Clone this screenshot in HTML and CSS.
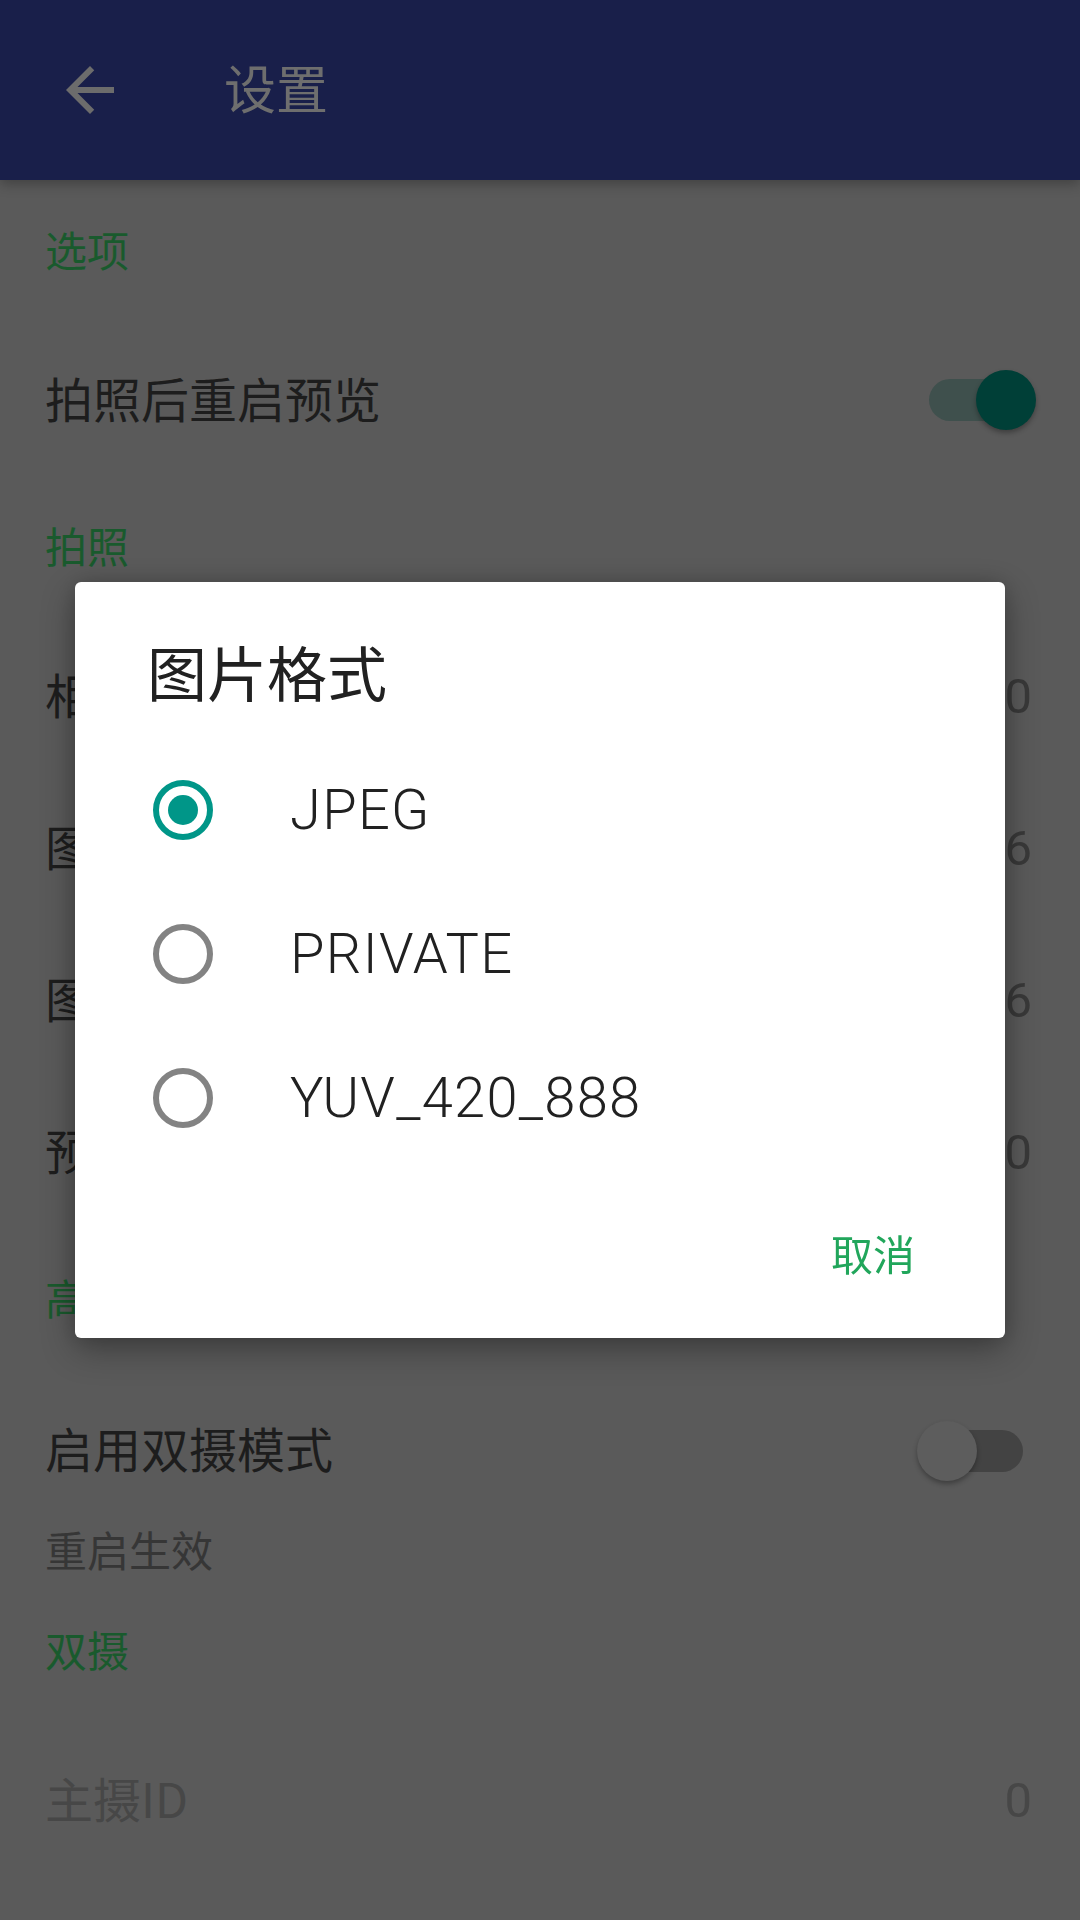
FILE: index.html
```html
<!DOCTYPE html>
<html lang="zh-CN">
<head>
<meta charset="utf-8">
<title>设置</title>
<link rel="stylesheet" href="styles.css">
</head>
<body>
<div class="screen">
  <header class="appbar">
    <svg class="back" viewBox="0 0 24 24" width="72" height="72"><path d="M20 11H7.83l5.59-5.59L12 4l-8 8 8 8 1.41-1.41L7.83 13H20v-2z"/></svg>
    <h1 class="appbar-title">设置</h1>
  </header>

  <main class="prefs">
    <div class="category">选项</div>
    <div class="row">
      <span class="row-title">拍照后重启预览</span>
      <span class="switch on"><span class="track"><span class="thumb"></span></span></span>
    </div>

    <div class="category">拍照</div>
    <div class="row"><span class="row-title">相机ID</span><span class="value">0</span></div>
    <div class="row"><span class="row-title">图片格式</span><span class="value">256</span></div>
    <div class="row"><span class="row-title">图片尺寸</span><span class="value">4608x3456</span></div>
    <div class="row"><span class="row-title">预览尺寸</span><span class="value">1920x1080</span></div>

    <div class="category">高级</div>
    <div class="row row-two">
      <div class="row-text">
        <span class="row-title">启用双摄模式</span>
        <span class="summary">重启生效</span>
      </div>
      <span class="switch off"><span class="track"><span class="thumb"></span></span></span>
    </div>

    <div class="category">双摄</div>
    <div class="row disabled"><span class="row-title">主摄ID</span><span class="value">0</span></div>
  </main>

  <div class="overlay">
    <div class="dialog">
      <h2 class="dialog-title">图片格式</h2>
      <ul class="options">
        <li class="option"><span class="radio checked"></span><span class="option-label">JPEG</span></li>
        <li class="option"><span class="radio"></span><span class="option-label">PRIVATE</span></li>
        <li class="option"><span class="radio"></span><span class="option-label">YUV_420_888</span></li>
      </ul>
      <div class="actions"><span class="btn">取消</span></div>
    </div>
  </div>
</div>
</body>
</html>
```
FILE: styles.css
```css
html, body {
  margin: 0;
  padding: 0;
}
body {
  width: 1080px;
  height: 1920px;
  background: #5a5a5a;
  font-family: Roboto, "Noto Sans CJK SC", sans-serif;
  overflow: hidden;
}
.screen {
  width: 1080px;
  height: 1920px;
  background: #5a5a5a;
}

/* App bar */
.appbar {
  height: 180px;
  background: #191f4a;
  display: flex;
  align-items: center;
  padding-left: 54px;
  box-shadow: 0 4px 12px rgba(0, 0, 0, 0.28);
  position: relative;
  z-index: 1;
}
.back {
  fill: #6c6c6c;
  flex-shrink: 0;
}
.appbar-title {
  margin: 0 0 6px 98px;
  font-family: "Noto Sans CJK SC", sans-serif;
  font-weight: 400;
  font-size: 52px;
  color: #6e6e6e;
  line-height: 1.2;
}

/* Preference list */
.prefs {
  display: flex;
  flex-direction: column;
}
.category {
  height: 144px;
  box-sizing: border-box;
  padding: 0 0 6px 45px;
  display: flex;
  align-items: center;
  font-family: "Noto Sans CJK SC", sans-serif;
  font-size: 42px;
  color: #195a2d;
  line-height: 1.2;
}
.row {
  height: 152px;
  box-sizing: border-box;
  display: flex;
  align-items: center;
  justify-content: space-between;
  padding: 0 48px 6px 45px;
}
.row-title {
  font-family: "Noto Sans CJK SC", sans-serif;
  font-size: 48px;
  color: #1d1d1d;
  line-height: 64px;
}
.value {
  padding-top: 7px;
  font-family: Roboto, sans-serif;
  font-size: 49px;
  color: #393939;
}
.disabled .row-title,
.disabled .value {
  color: #474747;
}
.row-two {
  height: 208px;
  align-items: flex-start;
  padding-top: 43px;
  padding-bottom: 0;
}
.row-text {
  display: flex;
  flex-direction: column;
}
.summary {
  margin-top: 42px;
  font-family: "Noto Sans CJK SC", sans-serif;
  font-size: 42px;
  line-height: 56px;
  color: #363636;
}

/* Switch */
.switch {
  display: flex;
  align-items: center;
  height: 60px;
  margin-right: 9px;
}
.row .switch {
  margin-bottom: -6px;
}
.row-two .switch {
  margin-top: 6px;
  margin-bottom: 0;
}
.track {
  width: 94px;
  height: 42px;
  border-radius: 21px;
  display: flex;
  align-items: center;
}
.thumb {
  width: 60px;
  height: 60px;
  border-radius: 50%;
  flex-shrink: 0;
  box-shadow: 0 3px 5px rgba(0, 0, 0, 0.3);
}
.switch.on .track {
  background: #3f504d;
  justify-content: flex-end;
}
.switch.on .thumb {
  background: #003f37;
  margin-right: -13px;
}
.switch.off .track {
  background: #434343;
  justify-content: flex-start;
}
.switch.off .thumb {
  background: #5d5d5d;
  margin-left: -12px;
}

/* Dialog */
.overlay {
  position: fixed;
  inset: 0;
  display: flex;
  align-items: center;
  justify-content: center;
  z-index: 2;
}
.dialog {
  width: 930px;
  background: #ffffff;
  border-radius: 6px;
  padding: 49px 0 29px;
  box-sizing: border-box;
  box-shadow: 0 12px 34px rgba(0, 0, 0, 0.3), 0 0 22px rgba(0, 0, 0, 0.16);
}
.dialog-title {
  margin: 0 0 27px;
  padding-left: 72px;
  font-family: "Noto Sans CJK SC", sans-serif;
  font-weight: 400;
  font-size: 60px;
  line-height: 80px;
  color: #212121;
}
.options {
  list-style: none;
  margin: 0;
  padding: 0;
}
.option {
  height: 144px;
  display: flex;
  align-items: center;
  padding-left: 78px;
}
.radio {
  width: 60px;
  height: 60px;
  box-sizing: border-box;
  border: 6px solid #838383;
  border-radius: 50%;
  display: flex;
  align-items: center;
  justify-content: center;
  flex-shrink: 0;
}
.radio.checked {
  border-color: #009688;
}
.radio.checked::after {
  content: "";
  width: 30px;
  height: 30px;
  border-radius: 50%;
  background: #009688;
}
.option-label {
  margin-left: 77px;
  font-family: Roboto, sans-serif;
  font-weight: 300;
  font-size: 56px;
  letter-spacing: 1.3px;
  color: #212121;
}
.actions {
  margin-top: 31px;
  height: 108px;
  display: flex;
  justify-content: flex-end;
  align-items: center;
  padding-right: 66px;
}
.btn {
  padding: 0 24px 5px;
  font-family: "Noto Sans CJK SC", sans-serif;
  font-size: 42px;
  color: #21a65b;
  line-height: 100px;
}
```
